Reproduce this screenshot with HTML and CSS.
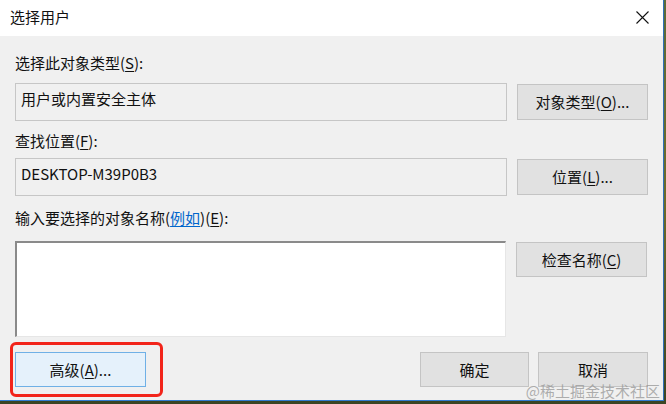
FILE: index.html
```html
<!DOCTYPE html>
<html lang="zh-CN">
<head>
<meta charset="utf-8">
<title>选择用户</title>
<link rel="stylesheet" href="styles.css">
</head>
<body>
<div class="desktop">
  <div class="window">
    <div class="titlebar">
      <span class="title">选择用户</span>
      <span class="close">
        <svg width="13" height="13" viewBox="0 0 13 13"><path d="M0.5 0.5 L12.5 12.5 M12.5 0.5 L0.5 12.5" stroke="#111" stroke-width="1.1" fill="none"/></svg>
      </span>
    </div>
    <div class="content">
      <div class="label l1">选择此对象类型(<u>S</u>):</div>
      <div class="row">
        <div class="field">用户或内置安全主体</div>
        <button class="btn">对象类型(<u>O</u>)...</button>
      </div>
      <div class="label l2">查找位置(<u>F</u>):</div>
      <div class="row">
        <div class="field">DESKTOP-M39P0B3</div>
        <button class="btn">位置(<u>L</u>)...</button>
      </div>
      <div class="label l3">输入要选择的对象名称(<a class="link">例如</a>)(<u>E</u>):</div>
      <div class="row row-top">
        <div class="textarea"></div>
        <button class="btn btn-check">检查名称(<u>C</u>)</button>
      </div>
      <div class="footer">
        <button class="btn btn-adv">高级(<u>A</u>)...</button>
        <div class="spacer"></div>
        <button class="btn btn-ok">确定</button>
        <button class="btn btn-cancel">取消</button>
      </div>
    </div>
    <div class="highlight"></div>
    <div class="watermark">@稀土掘金技术社区</div>
  </div>
</div>
</body>
</html>
```

FILE: styles.css
```css
* { box-sizing: border-box; }
html, body { margin: 0; padding: 0; }
body {
  width: 666px;
  height: 404px;
  overflow: hidden;
  background: linear-gradient(180deg, #5b6a3a 0%, #6b6a2a 50%, #3b4424 100%);
  font-family: "Noto Sans CJK SC", "Microsoft YaHei", sans-serif;
  color: #111;
}
.desktop { width: 666px; height: 404px; }
.window {
  position: relative;
  width: 664px;
  height: 401px;
  background: #f0f0f0;
  border-right: 1px solid #2f6fb8;
  border-bottom: 1px solid #2f7bd0;
}
.titlebar {
  height: 36px;
  background: #ffffff;
  display: flex;
  align-items: center;
  justify-content: space-between;
}
.title {
  font-size: 15px;
  padding-left: 10px;
  line-height: 20px;
  margin-top: -2px;
}
.close {
  width: 42px;
  display: flex;
  justify-content: center;
  align-items: center;
  margin-right: 0;
  margin-top: -2px;
}
.close svg { display: block; }
.content {
  padding: 17px 15px 0 15px;
  font-size: 15px;
}
.label {
  line-height: 20px;
  height: 20px;
}
.l1 { margin-bottom: 10px; }
.l2 { margin-top: 10px; margin-bottom: 7px; }
.l3 { margin-top: 12px; margin-bottom: 13px; }
u { text-decoration: underline; text-underline-offset: 2px; text-decoration-thickness: 1px; }
.link { color: #0066cc; text-decoration: underline; text-underline-offset: 2px; }
.row {
  display: flex;
  align-items: center;
  gap: 10px;
}
.row-top { align-items: flex-start; }
.field {
  width: 492px;
  height: 38px;
  border: 1px solid #c6c6c6;
  background: #f0f0f0;
  padding: 5px 5px;
  line-height: 20px;
  font-size: 15px;
}
.btn {
  font-family: inherit;
  font-size: 15px;
  color: #111;
  background: #e1e1e1;
  border: 1px solid #c4c4c4;
  height: 36px;
  width: 131px;
  padding: 0;
  line-height: 20px;
  margin: 0;
}
.btn-check { height: 35px; margin-top: 1px; }
.textarea {
  width: 491px;
  height: 96px;
  background: #ffffff;
  border-style: solid;
  border-width: 2px 1px 1px 2px;
  border-color: #8a8a8a #e6e6e6 #e6e6e6 #8a8a8a;
}
.footer {
  display: flex;
  align-items: center;
  margin-top: 15px;
  gap: 9px;
}
.spacer { flex: 1; }
.btn-adv {
  height: 35px;
  background: #e5f1fb;
  border-color: #6fb0e6;
}
.btn-ok { width: 109px; height: 35px; }
.btn-cancel { width: 110px; height: 35px; }
.highlight {
  position: absolute;
  left: 10px;
  top: 342px;
  width: 153px;
  height: 55px;
  border: 3px solid #f2241a;
  border-radius: 6px;
}
.watermark {
  position: absolute;
  right: 3px;
  top: 382px;
  font-size: 15px;
  line-height: 18px;
  color: rgba(150, 150, 150, 0.75);
  letter-spacing: 0;
}
```
